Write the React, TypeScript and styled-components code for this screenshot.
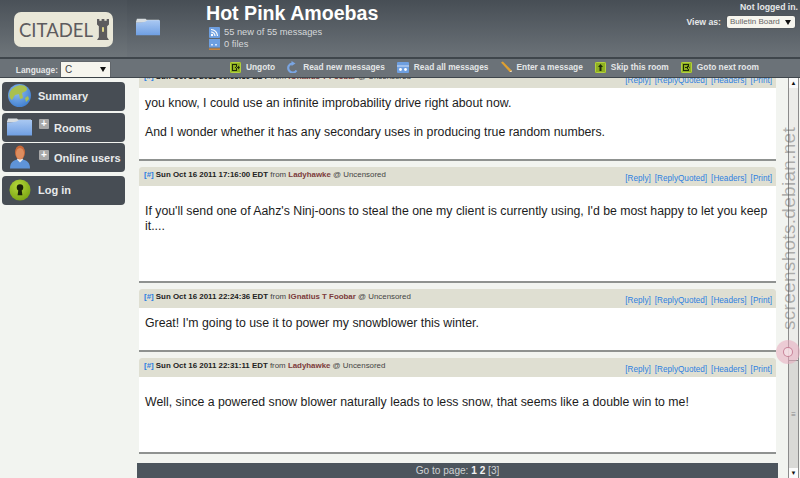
import React from 'react'
import styled, { createGlobalStyle } from 'styled-components'

const GlobalStyle = createGlobalStyle`
  html, body { margin: 0; padding: 0; height: 100%; overflow: hidden; background: #f2f4f0; }
  body { font-family: "Liberation Sans", Arial, sans-serif; }
`

interface Message {
  stamp: string
  author: string
  body: string[]
  height: number
  leadIn?: boolean
}

const messages: Message[] = [
  {
    stamp: 'Sun Oct 16 2011 06:58:39 EDT',
    author: 'IGnatius T Foobar',
    body: [
      'you know, I could use an infinite improbability drive right about now.',
      'And I wonder whether it has any secondary uses in producing true random numbers.',
    ],
    height: 90,
  },
  {
    stamp: 'Sun Oct 16 2011 17:16:00 EDT',
    author: 'Ladyhawke',
    body: [
      "If you'll send one of Aahz's Ninj-oons to steal the one my client is currently using, I'd be most happy to let you keep it....",
    ],
    height: 114,
    leadIn: true,
  },
  {
    stamp: 'Sun Oct 16 2011 22:24:36 EDT',
    author: 'IGnatius T Foobar',
    body: ["Great! I'm going to use it to power my snowblower this winter."],
    height: 61,
  },
  {
    stamp: 'Sun Oct 16 2011 22:31:11 EDT',
    author: 'Ladyhawke',
    body: ['Well, since a powered snow blower naturally leads to less snow, that seems like a double win to me!'],
    height: 94,
    leadIn: true,
  },
]

const Page = styled.div`
  position: relative;
  width: 800px;
  height: 478px;
  overflow: hidden;
  display: flex;
  flex-direction: column;
`

const Banner = styled.header`
  height: 57px;
  display: flex;
  background: linear-gradient(#474e55, #6b7278);
  border-bottom: 2px solid #3f464c;
`

const LogoCell = styled.div`
  width: 127px;
  display: flex;
  align-items: center;
  justify-content: center;
  padding-top: 2px;
  box-sizing: border-box;
  background: linear-gradient(#4a5158, #6e757a);
`

const Logo = styled.div`
  width: 99px;
  height: 35px;
  box-sizing: border-box;
  padding-left: 5px;
  border-radius: 7px;
  background: #e9e7d8;
  display: flex;
  align-items: center;
  gap: 3px;
  color: #5d5b5e;
  font-family: Lato, sans-serif;
  font-size: 18.5px;
`

const FolderCell = styled.div`
  width: 79px;
  padding: 17px 0 0 9px;
  box-sizing: border-box;
`

const RoomInfo = styled.div`
  flex: 1;
  padding-top: 1px;
`

const RoomTitle = styled.h1`
  margin: 0;
  font-size: 19.6px;
  line-height: 24px;
  font-weight: bold;
  color: #fff;
`

const StatList = styled.div`
  display: flex;
  flex-direction: column;
  padding-top: 1px;
`

const Stat = styled.div`
  display: flex;
  align-items: center;
  gap: 4px;
  height: 12px;
  margin-left: 3px;
  font-size: 9.3px;
  color: #d5d8da;

  svg {
    flex: none;
  }
`

const UserBox = styled.div`
  width: 200px;
  padding: 2px 2px 0 0;
  display: flex;
  flex-direction: column;
  align-items: flex-end;
  gap: 4px;
  font-size: 8.7px;
  line-height: 10px;
  font-weight: bold;
  color: #e6e8e9;
`

const ViewAs = styled.div`
  display: flex;
  align-items: center;
  gap: 6px;
  padding-right: 3px;
`

const FakeSelect = styled.div<{ $width: number }>`
  width: ${p => p.$width}px;
  height: 12px;
  box-sizing: border-box;
  padding: 0 4px 0 3px;
  background: #f6f5ee;
  border-radius: 2px;
  display: flex;
  align-items: center;
  justify-content: space-between;
  font-size: 8px;
  font-weight: normal;
  color: #666;
  white-space: nowrap;
  box-shadow: 0 0 1px #333;

  &::after {
    content: '';
    border: 3px solid transparent;
    border-top: 5px solid #111;
    border-bottom: 0;
  }
`

const Toolbar = styled.nav`
  height: 18px;
  display: flex;
  align-items: center;
  background: #6b7278;
  border-bottom: 1px solid #3f464c;
  font-size: 8.35px;
  font-weight: bold;
  color: #e4e6e7;
`

const LanguageCell = styled.div`
  width: 110px;
  height: 18px;
  display: flex;
  align-items: center;
  justify-content: flex-end;
  gap: 3px;
  padding-top: 3px;
  box-sizing: border-box;
`

const LanguageSelect = styled(FakeSelect)`
  height: 15px;
  border-radius: 0;
  padding: 0 4px 0 4px;
  font-size: 10px;
  color: #444;
`

const Actions = styled.div`
  display: flex;
  align-items: center;
  margin-left: 120px;
  padding-bottom: 2px;
`

const Action = styled.span`
  display: flex;
  align-items: center;
  gap: 5px;
  margin-right: 12px;

  svg {
    flex: none;
  }
`

const Body = styled.div`
  flex: 1;
  display: flex;
  min-height: 0;
`

const Sidebar = styled.aside`
  width: 127px;
  padding: 4px 0 0 2px;
  box-sizing: border-box;
  display: flex;
  flex-direction: column;
  gap: 1.5px;
`

const NavItem = styled.div<{ $spaced?: boolean }>`
  width: 123px;
  height: 29px;
  margin-top: ${p => (p.$spaced ? 2.5 : 0)}px;
  padding: 0 0 2px 5px;
  box-sizing: border-box;
  border-radius: 4px;
  background: #474d54;
  display: flex;
  align-items: center;
  font-size: 11px;
  font-weight: bold;
  color: #e8eaeb;
`

const NavIcon = styled.span`
  width: 25px;
  height: 26px;
  display: flex;
  align-items: center;
  justify-content: center;
  margin-right: 6px;
`

const NavLabel = styled.span<{ $lowered?: boolean }>`
  padding-top: ${p => (p.$lowered ? 3 : 0)}px;
`

const Plus = styled.span`
  width: 10px;
  height: 10px;
  margin: -4px 5px 0 1px;
  border-radius: 1px;
  background: #a7a7a7;
  color: #fff;
  font-size: 10px;
  line-height: 10px;
  text-align: center;
`

const Main = styled.main`
  flex: 1;
  display: flex;
  flex-direction: column;
  min-width: 0;
  padding-left: 10px;
`

const Scroller = styled.div`
  flex: 1;
  overflow: hidden;
  min-height: 0;
`

const CardList = styled.div`
  margin: -9px 0 0 2px;
  display: flex;
  flex-direction: column;
  gap: 8px;
  width: 637px;
`

const Card = styled.article<{ $height: number }>`
  height: ${p => p.$height}px;
  background: #fff;
  border-radius: 3px 3px 0 0;
  box-shadow: 0 2px 0 #8f9290;
  display: flex;
  flex-direction: column;
`

const CardHead = styled.div`
  height: 19px;
  flex: none;
  box-sizing: border-box;
  background: #dfdfd2;
  border-radius: 3px 3px 0 0;
  padding: 3px 4px 0 5px;
  display: flex;
  justify-content: space-between;
  font-size: 7.9px;
  color: #444;
`

const Meta = styled.div`
  white-space: nowrap;
`

const Stamp = styled.strong`
  color: #222;
`

const Author = styled.span`
  color: #7c3b3b;
  font-weight: bold;
`

const Links = styled.div`
  display: flex;
  gap: 4px;
  padding-top: 4px;
  font-size: 8.2px;
  color: #2f7fe0;
  white-space: nowrap;
`

const Hash = styled.span`
  color: #2f7fe0;
  font-weight: bold;
`

const CardBody = styled.div<{ $leadIn?: boolean }>`
  padding: ${p => (p.$leadIn ? 18 : 8)}px 6px 0 6px;
  font-size: 12.3px;
  line-height: 15px;
  color: #1c1c1c;
`

const Para = styled.p`
  margin: 0 0 14px 0;
`

const Pager = styled.footer`
  height: 15px;
  width: 641px;
  background: #4c555d;
  color: #cfd2d4;
  font-size: 10.1px;
  line-height: 16px;
  text-align: center;

  b {
    color: #f2f2f2;
  }
`

const ScrollTrack = styled.div`
  width: 11px;
  margin: 0 1px 0 10px;
  display: flex;
  flex-direction: column;
  background: #ecece9;
  border-left: 1px solid #8b8b8b;
  border-right: 1px solid #8b8b8b;
  box-sizing: border-box;
`

const ScrollCap = styled.div`
  height: 10px;
  flex: none;
  background: #fbfbfb;
  display: flex;
  align-items: center;
  justify-content: center;
  font-size: 6px;
  color: #111;
`

const ScrollThumb = styled.div`
  flex: 1;
  margin-top: 272px;
  border-top: 1px solid #8b8b8b;
  background: #d9d9d6;
  display: flex;
  align-items: center;
  justify-content: center;
  font-size: 8px;
  color: #888;
`

const Watermark = styled.div`
  position: absolute;
  left: 779px;
  top: 126px;
  height: 204px;
  writing-mode: vertical-rl;
  transform: rotate(180deg);
  font-size: 19px;
  line-height: 19px;
  letter-spacing: 0.3px;
  color: rgba(90, 90, 90, 0.45);
  white-space: nowrap;
`

const WatermarkRing = styled.div`
  position: absolute;
  left: 776px;
  top: 340px;
  width: 24px;
  height: 24px;
  border-radius: 50%;
  background: rgba(232, 170, 190, 0.55);
  display: flex;
  align-items: center;
  justify-content: center;

  &::after {
    content: '';
    width: 8px;
    height: 8px;
    border-radius: 50%;
    border: 1px solid rgba(190, 110, 135, 0.8);
    background: rgba(245, 225, 230, 0.8);
  }
`

const Tower = () => (
  <svg width="14" height="23" viewBox="0 0 15 25">
    <path d="M1 1h2.5v2H6V1h3v2h2.5V1H14v6l-2 2v12l2 3H1l2-3V9L1 7z" fill="#5d5b5e" />
    <rect x="6.5" y="10" width="2" height="5" fill="#e8dc8a" />
  </svg>
)

const FolderIcon = ({ w, h, id }: { w: number; h: number; id: string }) => (
  <svg width={w} height={h} viewBox="0 0 25 18">
    <defs>
      <linearGradient id={id} x1="0" y1="0" x2="0" y2="1">
        <stop offset="0" stopColor="#a9c8f2" />
        <stop offset="1" stopColor="#6f9fe3" />
      </linearGradient>
    </defs>
    <path d="M0 4 L1 1 H10 L11 2 H24 V5 H0z" fill="#d8dde0" />
    <path d="M0 5 C8 5 10 4 12 2.5 H25 V18 H0z" fill={`url(#${id})`} />
  </svg>
)

const RssIcon = () => (
  <svg width="11" height="11" viewBox="0 0 11 11">
    <rect width="11" height="11" rx="1" fill="#6e9fe0" />
    <circle cx="3" cy="8" r="1.2" fill="#fff" />
    <path d="M2 5a4 4 0 0 1 4 4M2 2.5A6.5 6.5 0 0 1 8.5 9" stroke="#fff" strokeWidth="1.2" fill="none" />
  </svg>
)

const FilesIcon = () => (
  <svg width="11" height="11" viewBox="0 0 11 11">
    <rect width="11" height="8.5" fill="#6e9fe0" />
    <rect y="5" x="2" width="2" height="1.5" fill="#dbe8fa" />
    <rect y="5" x="6" width="2" height="1.5" fill="#dbe8fa" />
    <rect y="9.5" width="11" height="1.3" fill="#e08a30" />
  </svg>
)

const GreenBox = ({ d }: { d: string }) => (
  <svg width="11" height="11" viewBox="0 0 11 11">
    <rect width="11" height="11" rx="1" fill="#8fb020" />
    <rect x="0.5" y="0.5" width="10" height="10" rx="1" fill="none" stroke="#b3d040" />
    <path d={d} fill="#1d2a08" fillRule="evenodd" />
  </svg>
)

const RefreshIcon = () => (
  <svg width="11" height="12" viewBox="0 0 11 12">
    <path d="M9.5 9.5A4.5 4.5 0 1 1 5.5 2.5" stroke="#7aa5e2" strokeWidth="2.2" fill="none" />
    <path d="M4.5 0 L8.5 2.5 L4.5 5z" fill="#7aa5e2" />
  </svg>
)

const ReadAllIcon = () => (
  <svg width="12" height="11" viewBox="0 0 12 11">
    <rect width="12" height="11" rx="1" fill="#6e9fe0" />
    <rect y="3.5" width="12" height="1" fill="#cfe0f7" />
    <circle cx="3.5" cy="7.5" r="1.4" fill="#fff" />
    <circle cx="8.5" cy="7.5" r="1.4" fill="#fff" />
  </svg>
)

const PencilIcon = () => (
  <svg width="11" height="12" viewBox="0 0 12 12">
    <path d="M0 1 L2 0 L11.5 9.5 L11.5 11.5 L9.5 11.5z" fill="#e0a030" />
    <path d="M9.5 11.5 L11.5 9.5 L11.5 11.5z" fill="#eee" />
  </svg>
)

const GlobeIcon = () => (
  <svg width="23" height="23" viewBox="0 0 23 23">
    <defs>
      <radialGradient id="sea" cx="0.4" cy="0.35" r="0.7">
        <stop offset="0" stopColor="#8fbcf0" />
        <stop offset="1" stopColor="#3f7fd0" />
      </radialGradient>
    </defs>
    <circle cx="11.5" cy="11.5" r="11.5" fill="url(#sea)" />
    <path d="M2 8C5 2 12 0 17 2c2 2 3 3 1 5l-4 2 1 5-3 1-1-5-4 1-3 5C1 14 1 11 2 8z" fill="#a9c050" />
    <path d="M17 14l3-2 1 3-3 3z" fill="#a9c050" />
  </svg>
)

const PersonIcon = () => (
  <svg width="22" height="25" viewBox="0 0 22 24">
    <path d="M1 24c0-6 3-8 7-9h6c4 1 7 3 7 9z" fill="#5f94d8" />
    <path d="M8 15l3 3 3-3-1-2H9z" fill="#f0f0f0" />
    <ellipse cx="11" cy="8" rx="5" ry="7" fill="#c8693a" />
    <ellipse cx="11" cy="9" rx="4" ry="5.5" fill="#dd8d5f" />
  </svg>
)

const KeyIcon = () => (
  <svg width="22" height="22" viewBox="0 0 23 23">
    <defs>
      <radialGradient id="lime" cx="0.4" cy="0.3" r="0.8">
        <stop offset="0" stopColor="#b4d83a" />
        <stop offset="1" stopColor="#76a010" />
      </radialGradient>
    </defs>
    <circle cx="11.5" cy="11.5" r="11" fill="url(#lime)" />
    <circle cx="11.5" cy="9" r="3.4" fill="#1b2208" />
    <path d="M10 10h3l1 7H9z" fill="#1b2208" />
  </svg>
)

const MessageCard = ({ message }: { message: Message }) => (
  <Card $height={message.height}>
    <CardHead>
      <Meta>
        <Hash>[#]</Hash> <Stamp>{message.stamp}</Stamp> from <Author>{message.author}</Author> @ Uncensored
      </Meta>
      <Links>
        <span>[Reply]</span>
        <span>[ReplyQuoted]</span>
        <span>[Headers]</span>
        <span>[Print]</span>
      </Links>
    </CardHead>
    <CardBody $leadIn={message.leadIn}>
      {message.body.map(text => (
        <Para key={text}>{text}</Para>
      ))}
    </CardBody>
  </Card>
)

export default function App() {
  return (
    <Page>
      <GlobalStyle />
      <Banner>
        <LogoCell>
          <Logo>
            CITADEL
            <Tower />
          </Logo>
        </LogoCell>
        <FolderCell>
          <FolderIcon w={24} h={19} id="roomFolder" />
        </FolderCell>
        <RoomInfo>
          <RoomTitle>Hot Pink Amoebas</RoomTitle>
          <StatList>
            <Stat>
              <RssIcon />
              55 new of 55 messages
            </Stat>
            <Stat>
              <FilesIcon />0 files
            </Stat>
          </StatList>
        </RoomInfo>
        <UserBox>
          <span>Not logged in.</span>
          <ViewAs>
            View as:
            <FakeSelect $width={68}>Bulletin Board</FakeSelect>
          </ViewAs>
        </UserBox>
      </Banner>
      <Toolbar>
        <LanguageCell>
          Language:
          <LanguageSelect $width={49}>C</LanguageSelect>
        </LanguageCell>
        <Actions>
          <Action>
            <GreenBox d="M2 2h5v7H2zM3 3v5h3V3zM5 5h3V3.5l2 2-2 2V6H5z" />
            Ungoto
          </Action>
          <Action>
            <RefreshIcon />
            Read new messages
          </Action>
          <Action>
            <ReadAllIcon />
            Read all messages
          </Action>
          <Action>
            <PencilIcon />
            Enter a message
          </Action>
          <Action>
            <GreenBox d="M5.5 2L8 5H6.5v4h-2V5H3z" />
            Skip this room
          </Action>
          <Action>
            <GreenBox d="M2 2h6v7H2zM3 3v5h4V3zM4 5h2V3.5l3 2-3 2V6H4z" />
            Goto next room
          </Action>
        </Actions>
      </Toolbar>
      <Body>
        <Sidebar>
          <NavItem>
            <NavIcon>
              <GlobeIcon />
            </NavIcon>
            Summary
          </NavItem>
          <NavItem>
            <NavIcon>
              <FolderIcon w={25} h={19} id="navFolder" />
            </NavIcon>
            <Plus>+</Plus>
            <NavLabel $lowered>Rooms</NavLabel>
          </NavItem>
          <NavItem>
            <NavIcon>
              <PersonIcon />
            </NavIcon>
            <Plus>+</Plus>
            <NavLabel $lowered>Online users</NavLabel>
          </NavItem>
          <NavItem $spaced>
            <NavIcon>
              <KeyIcon />
            </NavIcon>
            Log in
          </NavItem>
        </Sidebar>
        <Main>
          <Scroller>
            <CardList>
              {messages.map(message => (
                <MessageCard key={message.stamp} message={message} />
              ))}
            </CardList>
          </Scroller>
          <Pager>
            Go to page: <b>1</b> <b>2</b> [3]
          </Pager>
        </Main>
        <ScrollTrack>
          <ScrollCap>▲</ScrollCap>
          <ScrollThumb>≡</ScrollThumb>
          <ScrollCap>▼</ScrollCap>
        </ScrollTrack>
      </Body>
      <Watermark>screenshots.debian.net</Watermark>
      <WatermarkRing />
    </Page>
  )
}
